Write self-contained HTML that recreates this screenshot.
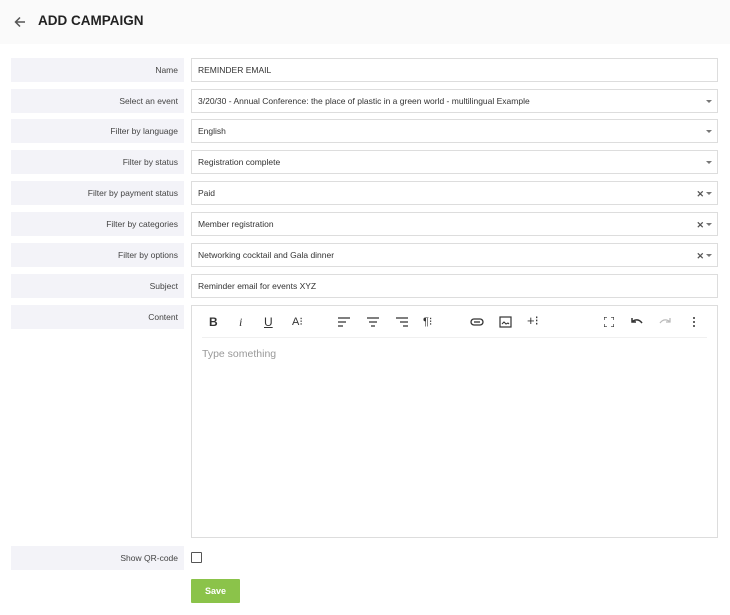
<!DOCTYPE html>
<html><head><meta charset="utf-8"><style>
*{box-sizing:border-box;margin:0;padding:0}
body{width:730px;height:615px;background:#fff;font-family:"Liberation Sans",sans-serif;color:#333;position:relative;overflow:hidden}
.hdr{position:absolute;left:0;top:0;width:730px;height:44px;background:#fafafa}
.hdr .t{position:absolute;left:38px;top:13px;font-size:13.5px;font-weight:bold;color:#222}
.lab{position:absolute;left:11px;width:173px;height:24px;background:#f3f3f8;font-size:8.5px;color:#444;text-align:right;padding-right:6px;line-height:24px}
.inp{position:absolute;left:191px;width:527px;height:24px;border:1px solid #ddd;background:#fff;font-size:8.5px;color:#333;line-height:22px;padding-left:6px}
.arr{position:absolute;right:5px;top:10px;width:0;height:0;border-left:3px solid transparent;border-right:3px solid transparent;border-top:3px solid #777}
.x{position:absolute;right:13px;top:1px;font-size:9px;font-weight:bold;color:#555}
.ed{position:absolute;left:191px;top:305px;width:527px;height:233px;border:1px solid #ddd}
.tb{position:absolute;left:10px;right:10px;top:0;height:32px;border-bottom:1px solid #f0f0f0}
.ic{position:absolute;top:9px;font-size:12px;color:#333}
.ph{position:absolute;left:10px;top:42px;font-size:10.5px;color:#999}
.cb{position:absolute;left:191px;top:552px;width:11px;height:11px;border:1.5px solid #555;border-radius:1px}
.save{position:absolute;left:191px;top:579px;width:49px;height:24px;background:#8bc34a;color:#fff;font-size:9px;font-weight:bold;text-align:center;line-height:24px;border-radius:1px}
</style></head><body>
<div class="hdr">
<svg style="position:absolute;left:14px;top:16px" width="12" height="12" viewBox="0 0 12 12"><path d="M11 6H2M6 1.5L1.5 6 6 10.5" stroke="#555" stroke-width="1.5" fill="none"/></svg>
<div class="t">ADD CAMPAIGN</div></div>

<div class="lab" style="top:58px">Name</div><div class="inp" style="top:58px">REMINDER EMAIL</div>
<div class="lab" style="top:89px">Select an event</div><div class="inp" style="top:89px">3/20/30 - Annual Conference: the place of plastic in a green world - multilingual Example<span class="arr"></span></div>
<div class="lab" style="top:119px">Filter by language</div><div class="inp" style="top:119px">English<span class="arr"></span></div>
<div class="lab" style="top:150px">Filter by status</div><div class="inp" style="top:150px">Registration complete<span class="arr"></span></div>
<div class="lab" style="top:181px">Filter by payment status</div><div class="inp" style="top:181px">Paid<span class="x">✕</span><span class="arr"></span></div>
<div class="lab" style="top:212px">Filter by categories</div><div class="inp" style="top:212px">Member registration<span class="x">✕</span><span class="arr"></span></div>
<div class="lab" style="top:243px">Filter by options</div><div class="inp" style="top:243px">Networking cocktail and Gala dinner<span class="x">✕</span><span class="arr"></span></div>
<div class="lab" style="top:274px">Subject</div><div class="inp" style="top:274px">Reminder email for events XYZ</div>
<div class="lab" style="top:305px">Content</div>
<div class="ed"><div class="tb">
<span class="ic" style="left:7px;font-weight:bold">B</span>
<span class="ic" style="left:37px;font-style:italic;font-family:'Liberation Serif',serif">i</span>
<span class="ic" style="left:62px;text-decoration:underline">U</span>
<span class="ic" style="left:90px;font-size:11px">A⁝</span>
<svg class="ic" style="left:136px;top:11px" width="12" height="10"><path d="M0 1h12M0 5h8M0 9h5" stroke="#333" stroke-width="1.2"/></svg>
<svg class="ic" style="left:165px;top:11px" width="12" height="10"><path d="M0 1h12M2 5h8M4 9h4" stroke="#333" stroke-width="1.2"/></svg>
<svg class="ic" style="left:194px;top:11px" width="12" height="10"><path d="M0 1h12M4 5h8M7 9h5" stroke="#333" stroke-width="1.2"/></svg>
<span class="ic" style="left:221px;font-size:11px">¶⁝</span>
<svg class="ic" style="left:268px;top:12px" width="14" height="8"><rect x="1" y="1" width="12" height="6" rx="3" stroke="#333" stroke-width="1.3" fill="none"/><path d="M4 4h6" stroke="#333" stroke-width="1.3"/></svg>
<svg class="ic" style="left:297px;top:10px" width="13" height="12"><rect x="1" y="1" width="11" height="10" stroke="#333" stroke-width="1.2" fill="none"/><path d="M3 8l2-2 2 2 2-1 1 1" stroke="#333" fill="none"/></svg>
<span class="ic" style="left:325px;font-size:13px;top:7px">+⁝</span>
<svg class="ic" style="left:402px;top:11px" width="10" height="10"><path d="M0 3V0h3M7 0h3v3M10 7v3H7M3 10H0V7" stroke="#333" stroke-width="1.3" fill="none"/></svg>
<svg class="ic" style="left:428px;top:11px" width="13" height="9"><path d="M2 1v4h4M2 5c3-3 7-3 10 1" stroke="#333" stroke-width="1.5" fill="none"/></svg>
<svg class="ic" style="left:457px;top:11px" width="13" height="9"><path d="M11 1v4H7M11 5C8 2 4 2 1 6" stroke="#bbb" stroke-width="1.3" fill="none"/></svg>
<svg class="ic" style="left:490px;top:10px" width="4" height="12"><circle cx="2" cy="2" r="1" fill="#333"/><circle cx="2" cy="6" r="1" fill="#333"/><circle cx="2" cy="10" r="1" fill="#333"/></svg>
</div><div class="ph">Type something</div></div>
<div class="lab" style="top:546px">Show QR-code</div>
<div class="cb"></div>
<div class="save">Save</div>
</body></html>
